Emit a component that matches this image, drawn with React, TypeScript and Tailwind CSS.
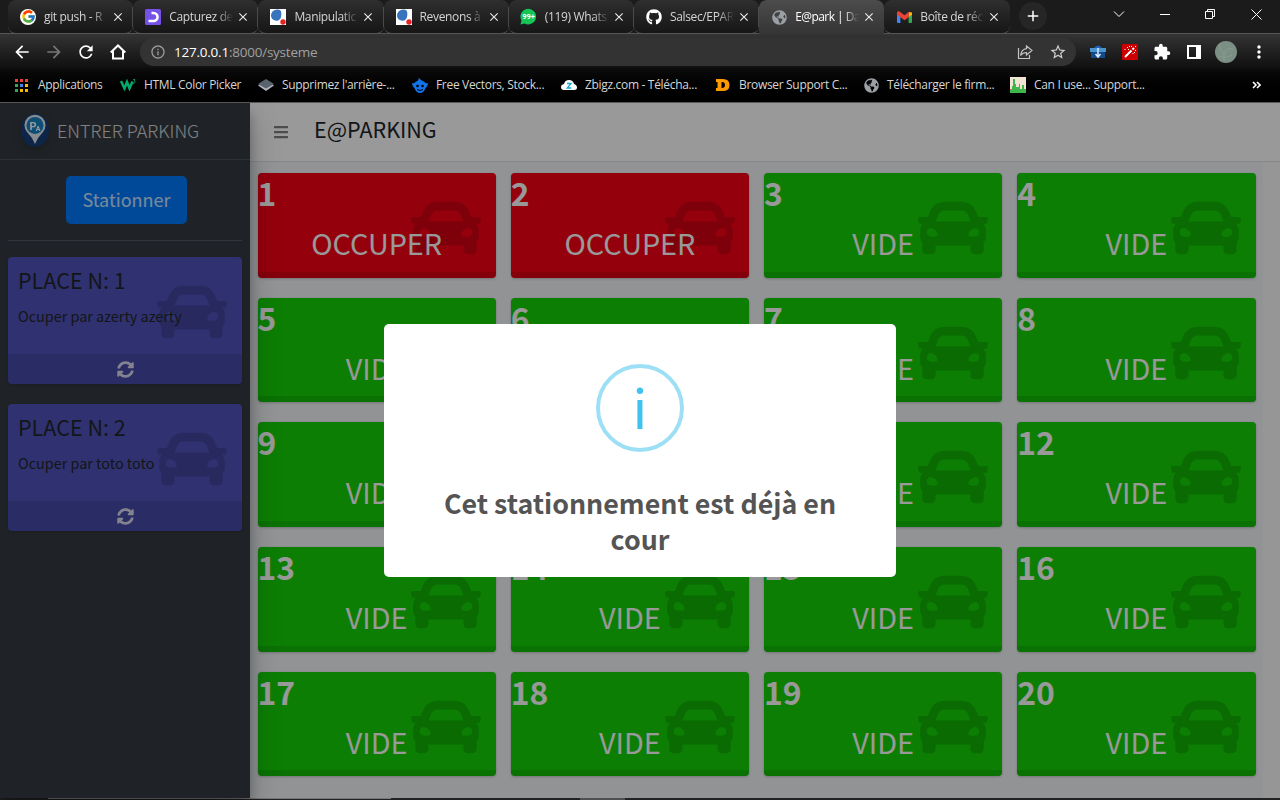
import React from "react";
import { FaCar, FaBars, FaSyncAlt, FaGithub, FaGlobeAmericas } from "react-icons/fa";
import { FcGoogle } from "react-icons/fc";
import { MdArrowBack, MdArrowForward, MdRefresh, MdInfoOutline, MdStarBorder, MdClose, MdAdd, MdMoreVert, MdExtension } from "react-icons/md";

const ApiDot = () => (
  <svg width="16" height="16" viewBox="0 0 16 16">
    <rect width="16" height="16" fill="#fff" />
    <path d="M4 1.500C6 .3 9 .2 10.500 1.500C11.600 3 11.500 6 11 8C10.500 10 9 11.800 6.500 11.700C3.500 11.500 1 9.500 1 6.500C1 4.300 2.300 2.400 4 1.500Z" fill="#3774bd" />
    <circle cx="13" cy="13" r="2.700" fill="#ea2024" />
  </svg>
);

const Purple = () => (
  <svg width="16" height="16" viewBox="0 0 16 16">
    <rect width="16" height="16" rx="1.500" fill="#7452e8" />
    <path d="M6.500 4H8.500A4 4 0 0 1 8.500 12H3.500" fill="none" stroke="#fff" strokeWidth="2.600" />
  </svg>
);

const Whats = () => (
  <svg width="17" height="17" viewBox="0 0 17 17" className="shrink-0">
    <path d="M.500 16.500L1.500 12.500A7.800 7.800 0 1 1 4.600 15.500Z" fill="#13c656" />
    <text x="8.600" y="11.400" fontSize="7.500" fontWeight="700" fill="#fff" textAnchor="middle" fontFamily="Roboto, sans-serif">99+</text>
  </svg>
);

const Gmail = () => (
  <svg width="15" height="12" viewBox="0 0 15 12">
    <path d="M0 2V11a1 1 0 0 0 1 1H3.400V4.500Z" fill="#4285f4" />
    <path d="M15 2V11a1 1 0 0 1-1 1H11.600V4.500Z" fill="#34a853" />
    <path d="M11.600 1L15 1.500V3.600L11.600 6.200Z" fill="#fbbc04" />
    <path d="M0 1.500Q.500-.300 2.600.500L7.500 4.200L12.400.500L11.600 6.200L7.500 9.200L3.400 6.200L0 3.600Z" fill="#ea4335" />
  </svg>
);

const Globe = () => <FaGlobeAmericas size={15} color="#9aa0a6" />;

const tabs = [
  { t: "git push - R", i: <FcGoogle size={15} className="rounded-full" />, g: true },
  { t: "Capturez de", i: <Purple /> },
  { t: "Manipulatic", i: <ApiDot /> },
  { t: "Revenons à", i: <ApiDot /> },
  { t: "(119) Whats", i: <Whats /> },
  { t: "Salsec/EPAR", i: <FaGithub size={16} color="#fff" /> },
  { t: "E@park | Da", i: <Globe />, active: true },
  { t: "Boîte de réc", i: <Gmail /> },
];

function Tab({ tab, last }: { tab: any; last: boolean }) {
  return (
    <div
      className={
        "flex h-[34px] w-[125.200px] shrink-0 items-center rounded-t-lg pl-3 " +
        (tab.active ? "bg-linear-to-b from-[#4c4c4c] to-[#353535]" : "rounded-b-lg border-b border-[#555] bg-linear-to-b from-[#2f2f2f] to-[#161616]")
      }
    >
      <span className={"flex size-4 shrink-0 items-center justify-center " + (tab.g ? "rounded-full bg-white" : "")}>{tab.i}</span>
      <span
        className={
          "ml-2 w-[64px] overflow-hidden whitespace-nowrap text-[12px] mask-r-from-75% " +
          (tab.active ? "tracking-[-0.550px] text-white" : "tracking-[-0.350px] text-[#d4d4d4]")
        }
      >
        {tab.t}
      </span>
      <MdClose size={14} color="#e8e8e8" className="ml-[3px] shrink-0" />
      {!tab.active && !last && <span className="ml-auto h-5 w-px shrink-0 bg-[#4a4a4a]" />}
    </div>
  );
}

function Mark({ icon, text, w }: { icon: React.ReactNode; text: string; w: string }) {
  return (
    <div className={"flex shrink-0 items-center gap-2 " + w}>
      <span className="flex w-4 shrink-0 justify-center">{icon}</span>
      <span className="-mt-px whitespace-nowrap text-[12px] leading-4 tracking-[-0.320px] text-[#d6d6d6]">{text}</span>
    </div>
  );
}

function Browser() {
  return (
    <div className="flex h-[103px] flex-col bg-black font-['Open_Sans',sans-serif]">
      <div className="flex h-[34px] border-b border-[#555] bg-[#1b1b1b] pl-2">
        {tabs.map((t, i) => (
          <Tab key={t.t} tab={t} last={i === 7} />
        ))}
        <span className="mt-[2px] ml-[9px] flex size-7 items-center justify-center rounded-full bg-[#262626]">
          <MdAdd size={18} color="#fff" />
        </span>
        <div className="mr-[7px] ml-auto flex h-7 items-center text-white">
          <svg width="160" height="14" viewBox="0 0 160 14" fill="none" stroke="currentColor" strokeWidth="1">
            <path d="M1 4.500L6 9.500L11 4.500M47 7.500H57M92.500 4.500H99.500V11.500H92.500ZM94.500 4.500V2.500H101.500V9.500H99.500M138.500 2.500L148.500 12.500M148.500 2.500L138.500 12.500" />
          </svg>
        </div>
      </div>
      <div className="flex h-[34px] shrink-0 items-center bg-linear-to-b from-[#343434] to-[#101010] pt-[2px] pr-[13px] pl-3 text-white">
        <MdArrowBack size={20} className="mr-3" />
        <MdArrowForward size={20} color="#777" className="mr-3" />
        <MdRefresh size={20} className="mr-[14px]" />
        <svg className="mr-[14px]" width="16" height="16" viewBox="0 0 16 16" fill="none" stroke="#fff" strokeWidth="2">
          <path d="M.700 8.500L8 1.500L15.300 8.500M3 7V14.500H13V7" />
        </svg>
        <div className="flex h-7 w-[936px] items-center rounded-full bg-[#333] pl-[10px] pr-[9px]">
          <MdInfoOutline size={16} color="#9a9a9a" />
          <span className="ml-2 text-[13.500px] tracking-[-0.230px] text-[#a0a0a0]">
            <span className="text-white">127.0.0.1</span>:8000/systeme
          </span>
          <svg className="mr-4 ml-auto" width="16" height="16" viewBox="0 0 16 16" fill="none" stroke="#c4c4c4" strokeWidth="1.200">
            <path d="M1.500 4V14.500H12.500V11M9.500 2L15 6.500L9.500 11V8.500C7 8.500 5 9.500 3.500 11.500C4 8 6 5 9.500 4.600Z" />
          </svg>
          <MdStarBorder size={18} color="#d0d0d0" />
        </div>
        <svg className="ml-[14px]" width="16" height="14" viewBox="0 0 16 14">
          <path d="M4 3Q8-2 12 3Z" fill="#1b62b8" />
          <path d="M0 3H16V7H0Z" fill="#4a94d0" />
          <path d="M1 7H15V13H1Z" fill="#134a8a" />
          <path d="M8 3V11M5.500 9L8 12L10.500 9" stroke="#d8ecff" strokeWidth="1.500" fill="none" />
        </svg>
        <svg className="ml-4" width="16" height="16" viewBox="0 0 16 16">
          <rect width="16" height="16" rx="1" fill="#cc0000" />
          <path d="M3 13L9.500 6.500" stroke="#fff" strokeWidth="2" />
          <path d="M10.500 5.500L12 4" stroke="#fff" strokeWidth="2" />
          <path d="M2.500 5.500h1M5 3.500h1M7 2.500h1M9 2.500h1M13 6.500h1M12 8.500h1M6 5.500h1M13 2.500h1M10.500 9.500h1" stroke="#fff" />
        </svg>
        <MdExtension size={18} className="ml-[15px]" />
        <svg className="ml-4" width="14" height="14" viewBox="0 0 14 14">
          <path d="M1 1H13V13H1Z" fill="none" stroke="#fff" strokeWidth="2" />
          <path d="M9 0H14V14H9Z" fill="#fff" />
        </svg>
        <svg className="ml-[14px]" width="22" height="22" viewBox="0 0 22 22">
          <circle cx="11" cy="11" r="11" fill="#7c8f85" />
          <path d="M5 3Q4 10 9 12Q12 6 18 8M4 15Q10 18 17 14M9 12V20" stroke="#8a9c91" strokeWidth="1" fill="none" />
        </svg>
        <MdMoreVert size={20} className="ml-auto -mr-[2px]" />
      </div>
      <div className="flex h-[34px] items-center bg-linear-to-b from-[#0d0d0d] to-black pl-[13px]">
        <Mark w="w-[107px] [&>span:last-child]:ml-px" text="Applications" icon={
          <svg width="13" height="13" viewBox="0 0 13 13">
            <path d="M0 0h3v3H0zM5 0h3v3H5zM10 0h3v3h-3z" fill="#ea4335" />
            <path d="M0 5h3v3H0zM0 10h3v3H0z" fill="#34a853" />
            <path d="M5 5h3v3H5z" fill="#4285f4" />
            <path d="M10 5h3v3h-3zM5 10h3v3H5zM10 10h3v3h-3z" fill="#fbbc04" />
          </svg>
        } />
        <Mark w="w-[138px]" text="HTML Color Picker" icon={
          <svg width="16" height="12" viewBox="0 0 16 12" fill="none" stroke="#04aa6d">
            <path d="M1 2L4.500 9.500L7 3L9.500 9.500L12.500 2.500" strokeWidth="2.500" />
            <path d="M13 .500H15L14 2Q15.500 2 15 3.500T13 4" strokeWidth=".8" />
          </svg>
        } />
        <Mark w="w-[154px]" text="Supprimez l'arrière-..." icon={
          <svg width="16" height="12" viewBox="0 0 16 12">
            <path d="M0 6.500L8 2.500L16 6.500L8 12Z" fill="#aeb4ba" />
            <path d="M0 5L8 0L16 5L8 9.500Z" fill="#59636e" />
          </svg>
        } />
        <Mark w="w-[149px]" text="Free Vectors, Stock..." icon={
          <svg width="16" height="15" viewBox="0 0 16 15">
            <path d="M3.500 4L6 2.500L7 0L9 2L12.500 4Q14 6 16 5Q15.500 9 13.500 10Q12 15 8 15Q4 15 2.500 10Q.500 9 0 5Q2 6 3.500 4Z" fill="#1273eb" />
            <circle cx="5.500" cy="8" r="1.300" fill="#000" />
            <circle cx="10.500" cy="8" r="1.300" fill="#000" />
            <path d="M5 11.500Q8 13.500 11 11.500" stroke="#000" fill="none" />
          </svg>
        } />
        <Mark w="w-[154px]" text="Zbigz.com - Télécha..." icon={
          <svg width="16" height="12" viewBox="0 0 16 12">
            <path d="M3 11Q0 11 0 8Q0 5.500 3 5Q4 1 8 1Q12 1 13 5Q16 6 16 8.500Q16 11 13 11Z" fill="#fff" />
            <path d="M6 4.500H10L6.300 9H10.300" fill="none" stroke="#16a5d8" strokeWidth="1.300" />
          </svg>
        } />
        <Mark w="w-[148px]" text="Browser Support C..." icon={
          <svg width="14" height="12" viewBox="0 0 14 12">
            <path fillRule="evenodd" d="M0 0H7Q13.500 0 13.500 6Q13.500 12 7 12H0V9H1.500V3H0ZM5.500 3V9Q9 9.200 9 6Q9 2.800 5.500 3Z" fill="#f90" />
          </svg>
        } />
        <Mark w="w-[147px]" text="Télécharger le firm..." icon={<Globe />} />
        <Mark w="w-[150px]" text="Can I use... Support..." icon={
          <svg width="16" height="16" viewBox="0 0 16 16">
            <rect width="16" height="16" fill="#f1e4d4" />
            <path d="M0 12H16V14H0Z" fill="#dc6b58" />
            <path d="M0 16V13H2V9H3V2H5V7H6V10H9V7H10V12H12V8H14V12H16V16Z" fill="#3eb649" />
          </svg>
        } />
        <svg className="mr-[19px] ml-auto" width="9" height="8" viewBox="0 0 9 8" fill="none" stroke="#fff" strokeWidth="1.600">
          <path d="M1 1L4 4L1 7M5 1L8 4L5 7" />
        </svg>
      </div>
      <div className="h-px shrink-0 bg-[#5a5a5a]" />
    </div>
  );
}

function Place({ n, who }: { n: number; who: string }) {
  return (
    <div className="relative mb-5 flex h-[127px] flex-col rounded bg-[#5053bb] text-[#212529] shadow">
      <FaCar size={70} className="absolute top-5 right-[15px] text-black/15" />
      <div className="relative h-[97px] p-[10px]">
        <div className="-mt-px text-[21.500px] leading-7">PLACE N: {n}</div>
        <div className="mt-[10px] text-[14.400px] leading-6">{who}</div>
      </div>
      <div className="flex flex-1 items-center justify-center rounded-b bg-black/10">
        <FaSyncAlt size={17} className="text-white/80" />
      </div>
    </div>
  );
}

export default function App() {
  return (
    <div className="flex h-[800px] w-[1280px] flex-col overflow-hidden bg-black">
      <Browser />
      <div className="relative flex h-[695px] shrink-0 bg-[#f4f6f9] font-['Noto_Sans_CJK_SC','Noto_Sans',sans-serif]">
        <aside className="relative z-10 w-[250px] shrink-0 bg-[#343a40] shadow-[0_14px_28px_rgba(0,0,0,.25),0_10px_10px_rgba(0,0,0,.22)]">
          <div className="flex h-[57px] items-center border-b border-[#4b545c] pb-[2px] pl-[21px]">
            <svg width="28" height="34" viewBox="0 0 28 34" className="drop-shadow-lg">
              <ellipse cx="14" cy="17" rx="14" ry="16.500" fill="#143f78" />
              <path d="M14 31Q11 24 6 19A10.500 10.500 0 1 1 22 19Q17 24 14 31Z" fill="#e3e8ee" />
              <circle cx="14" cy="12.500" r="8.500" fill="#1583c3" />
              <text x="8.500" y="17" fontSize="11" fontWeight="700" fill="#fff" fontFamily="Roboto, sans-serif">P</text>
              <text x="14.800" y="18" fontSize="7" fontWeight="700" fill="#fff" fontFamily="Roboto, sans-serif">A</text>
            </svg>
            <span className="ml-2 text-[18px] leading-[30px] font-light text-white/80">ENTRER PARKING</span>
          </div>
          <div className="px-2 pt-4">
            <div className="mb-4 flex h-[65px] justify-center border-b border-[#4f5962]">
              <div className="ml-[3px] flex h-12 w-[121px] items-center justify-center rounded-[5px] bg-[#007bff] pb-[2px] text-[18px] text-white/80">Stationner</div>
            </div>
            <Place n={1} who="Ocuper par azerty azerty" />
            <Place n={2} who="Ocuper par toto toto" />
          </div>
        </aside>
        <main className="flex flex-1 flex-col">
          <header className="flex h-[59px] shrink-0 items-center border-b border-[#dee2e6] bg-white pl-[23px]">
            <FaBars size={16} color="#7f7f7f" />
            <span className="mb-[6px] ml-[25px] text-[21.500px] leading-7 text-[#212529]">E@PARKING</span>
          </header>
          <div className="flex min-h-0 flex-1">
            <div className="grid w-[1013px] shrink-0 grid-cols-4 content-start gap-x-[15px] gap-y-5 px-[7.500px] pt-[11px]">
              {Array.from({ length: 20 }, (_, i) => (
                <div
                  key={i}
                  className={"relative flex h-[104.700px] flex-col rounded text-white shadow-[0_0_1px_rgba(0,0,0,.125),0_1px_3px_rgba(0,0,0,.2)] " + (i < 2 ? "bg-[#f70015]" : "bg-[#14d207]")}
                >
                  <FaCar size={70} className="absolute top-5 right-[14.500px] text-black/15" />
                  <div className="relative h-[46px] text-[31.800px] leading-[38px] font-bold">{i + 1}</div>
                  <div className="relative h-[50px] text-center text-[28.800px] leading-[48px]">{i < 2 ? "OCCUPER" : "VIDE"}</div>
                  <div className="mt-auto h-[6px] rounded-b bg-black/10" />
                </div>
              ))}
            </div>
            <div className="flex-1 bg-[#fafafa]" />
          </div>
        </main>
        <div className="absolute inset-0 z-20 bg-black/40" />
        <div className="absolute top-[221px] left-[384px] z-30 flex h-[253px] w-[512px] flex-col items-center rounded-[5px] bg-white pt-10">
          <div className="flex size-[88px] items-center justify-center rounded-full border-4 border-[#9de0f6]">
            <span className="mb-[5px] text-[54px] leading-[75px] text-[#3fc3ee]">i</span>
          </div>
          <div className="mt-[33px] w-[430px] text-center text-[26.800px] leading-9 font-bold text-[#545454]">Cet stationnement est déjà en cour</div>
        </div>
      </div>
      <div className="flex h-[2px] shrink-0 bg-[#222]">
        <div className="ml-12 h-px w-[343px] bg-[#777]" />
        <div className="ml-[189px] h-[2px] w-[45px] bg-[#505050]" />
      </div>
    </div>
  );
}
